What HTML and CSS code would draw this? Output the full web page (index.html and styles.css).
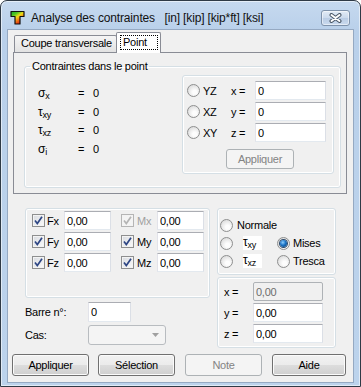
FILE: index.html
```html
<!DOCTYPE html>
<html>
<head>
    <title>Analyse des contraintes</title>
    <link rel="stylesheet" href="styles.css">
</head>
<body>
<div class="window">
    <div class="titlebar">
        <svg class="app-icon" width="15" height="15" viewBox="0 0 15 15">
            <defs>
                <linearGradient id="tgrad" x1="0" y1="0" x2="0.7" y2="1">
                    <stop offset="0" stop-color="#0fae2a"/>
                    <stop offset="0.3" stop-color="#58c824"/>
                    <stop offset="0.5" stop-color="#f2dc18"/>
                    <stop offset="0.75" stop-color="#ee6a14"/>
                    <stop offset="1" stop-color="#d8140f"/>
                </linearGradient>
            </defs>
            <path d="M1 1.5h13v5h-4v7.5h-5v-7.5h-4z" fill="url(#tgrad)" stroke="#111" stroke-width="1.2" stroke-linejoin="round"/>
        </svg>
        <span class="title">Analyse des contraintes&nbsp;&nbsp; [in] [kip] [kip*ft] [ksi]</span>
        <div class="close-btn">
            <svg width="13" height="10" viewBox="0 0 13 10">
                <path d="M2.5 2L10.5 8M10.5 2L2.5 8" stroke="#4a5868" stroke-width="4" stroke-linecap="round"/>
                <path d="M2.5 2L10.5 8M10.5 2L2.5 8" stroke="#ffffff" stroke-width="2" stroke-linecap="round"/>
            </svg>
        </div>
    </div>

    <div class="client">
        <div class="tabs">
            <div class="tab">Coupe transversale</div>
            <div class="tab active"><span class="focus">Point</span></div>
        </div>
        <div class="tabpanel">
            <fieldset class="group">
                <legend>Contraintes dans le point</legend>
                <div class="group-body">
                    <div class="stress">
                        <span class="sym">σ<sub>x</sub></span><span>=</span><span>0</span>
                        <span class="sym">τ<sub>xy</sub></span><span>=</span><span>0</span>
                        <span class="sym">τ<sub>xz</sub></span><span>=</span><span>0</span>
                        <span class="sym">σ<sub>i</sub></span><span>=</span><span>0</span>
                    </div>
                    <div class="box point-box">
                        <div class="point-grid">
                            <span class="rb"></span><span class="lbl">YZ</span><span class="lbl">x =</span><input type="text" value="0">
                            <span class="rb"></span><span class="lbl">XZ</span><span class="lbl">y =</span><input type="text" value="0">
                            <span class="rb"></span><span class="lbl">XY</span><span class="lbl">z =</span><input type="text" value="0">
                        </div>
                        <button class="btn small" disabled>Appliquer</button>
                    </div>
                </div>
            </fieldset>
        </div>

        <div class="lower">
            <div class="left-col">
                <div class="box loads">
                    <span class="cb on"><svg width="11" height="11" viewBox="0 0 11 11"><path d="M2 5.5L4.3 8.5L9 1.8" fill="none" stroke="#2e4684" stroke-width="1.7"/></svg></span>
                    <span class="lbl">Fx</span><input type="text" value="0,00">
                    <span class="cb on off"><svg width="11" height="11" viewBox="0 0 11 11"><path d="M2 5.5L4.3 8.5L9 1.8" fill="none" stroke="#b4b4b4" stroke-width="1.7"/></svg></span>
                    <span class="lbl m off">Mx</span><input type="text" value="0,00">

                    <span class="cb on"><svg width="11" height="11" viewBox="0 0 11 11"><path d="M2 5.5L4.3 8.5L9 1.8" fill="none" stroke="#2e4684" stroke-width="1.7"/></svg></span>
                    <span class="lbl">Fy</span><input type="text" value="0,00">
                    <span class="cb on"><svg width="11" height="11" viewBox="0 0 11 11"><path d="M2 5.5L4.3 8.5L9 1.8" fill="none" stroke="#2e4684" stroke-width="1.7"/></svg></span>
                    <span class="lbl m">My</span><input type="text" value="0,00">

                    <span class="cb on"><svg width="11" height="11" viewBox="0 0 11 11"><path d="M2 5.5L4.3 8.5L9 1.8" fill="none" stroke="#2e4684" stroke-width="1.7"/></svg></span>
                    <span class="lbl">Fz</span><input type="text" value="0,00">
                    <span class="cb on"><svg width="11" height="11" viewBox="0 0 11 11"><path d="M2 5.5L4.3 8.5L9 1.8" fill="none" stroke="#2e4684" stroke-width="1.7"/></svg></span>
                    <span class="lbl m">Mz</span><input type="text" value="0,00">
                </div>
                <div class="field-row barre">
                    <span class="field-label">Barre n°:</span>
                    <input type="text" class="num" value="0">
                </div>
                <div class="field-row cas">
                    <span class="field-label">Cas:</span>
                    <div class="combo">
                        <svg width="7" height="4" viewBox="0 0 7 4"><path d="M0 0h7L3.5 4z" fill="#a0a0a0"/></svg>
                    </div>
                </div>
            </div>

            <div class="right-col">
                <div class="box modes">
                    <span class="rb"></span><span class="lbl wide">Normale</span>
                    <span class="rb"></span><span class="lbl"><span class="tau">τ<sub>xy</sub></span></span>
                    <span class="rb on"></span><span class="lbl">Mises</span>
                    <span class="rb"></span><span class="lbl"><span class="tau">τ<sub>xz</sub></span></span>
                    <span class="rb"></span><span class="lbl">Tresca</span>
                </div>
                <div class="box coords">
                    <span class="lbl">x =</span><input type="text" value="0,00" disabled>
                    <span class="lbl">y =</span><input type="text" value="0,00">
                    <span class="lbl">z =</span><input type="text" value="0,00">
                </div>
            </div>
        </div>

        <div class="buttons">
            <button class="btn">Appliquer</button>
            <button class="btn">Sélection</button>
            <button class="btn" disabled>Note</button>
            <button class="btn aide">Aide</button>
        </div>
    </div>
</div>
</body>
</html>
```

FILE: styles.css
```css
* {
    box-sizing: border-box;
}
body {
    margin: 0;
    font-family: "Liberation Sans", Arial, sans-serif;
    font-size: 11px;
    color: #000;
    background: #ffffff;
}
.window {
    width: 361px;
    height: 387px;
    border: 1px solid #2f3a46;
    border-radius: 7px 7px 0 0;
    background: linear-gradient(#c6d9ef, #b9d0ea 30px, #bcd3ec);
    box-shadow: inset 0 0 0 1px rgba(255, 255, 255, 0.55);
    padding: 0 6px 3px 6px;
    display: flex;
    flex-direction: column;
}
.titlebar {
    height: 28px;
    padding-top: 5px;
    display: flex;
    align-items: center;
}
.app-icon {
    margin-left: 3px;
    flex: none;
}
.title {
    margin-left: 6px;
    font-size: 12px;
    letter-spacing: -0.15px;
    color: #111;
    white-space: nowrap;
}
.close-btn {
    margin-left: auto;
    margin-right: 4px;
    width: 29px;
    height: 16px;
    border: 1px solid #7e92ab;
    border-radius: 3px;
    background: linear-gradient(#e2ebf6, #cbdaec 50%, #b9cce4 50%, #cadaee);
    box-shadow: inset 0 0 0 1px rgba(255, 255, 255, 0.5);
    display: flex;
    align-items: center;
    justify-content: center;
}
.client {
    height: 354px;
    border: 1px solid #95a9c2;
    background: #f0f0f0;
    padding: 2px 6px 0 4px;
    letter-spacing: -0.25px;
}

/* tabs */
.tabs {
    display: flex;
    align-items: flex-start;
    height: 21px;
    margin-left: 1px;
    margin-bottom: -1px;
    position: relative;
    z-index: 1;
}
.tab {
    margin-top: 3px;
    margin-left: 1px;
    width: 103px;
    height: 17px;
    padding: 1px 0 0 6px;
    border: 1px solid #898c95;
    border-bottom: none;
    border-radius: 2px 2px 0 0;
    background: linear-gradient(#f5f5f5, #e2e2e2);
    white-space: nowrap;
}
.tab.active {
    margin-top: 0;
    margin-left: -1px;
    width: 45px;
    height: 21px;
    padding: 2px 0 0 3px;
    background: #ffffff;
}
.focus {
    display: block;
    width: 38px;
    height: 15px;
    border: 1px dotted #000;
    padding-left: 2px;
    line-height: 13px;
}
.tabpanel {
    margin-left: 1px;
    width: 334px;
    height: 142px;
    border: 1px solid #898c95;
    background: #f0f0f0;
}

/* group boxes */
.group {
    margin: 7px 0 0 10px;
    padding: 0;
    width: 317px;
    height: 128px;
    border: 1px solid #d5dfe5;
    border-radius: 3px;
    box-shadow: inset 0 0 0 1px #fff;
    min-inline-size: auto;
}
.group legend {
    margin-left: 5px;
    padding: 0 2px;
    line-height: 13px;
    font-size: 11px;
}
.group-body {
    display: flex;
    align-items: flex-start;
}
.box {
    border: 1px solid #d5dfe5;
    border-radius: 3px;
    box-shadow: inset 0 0 0 1px #fff;
}
.stress {
    margin: 11px 0 0 13px;
    display: grid;
    grid-template-columns: 40px 15px auto;
    grid-auto-rows: 18.5px;
    align-items: center;
}
.sym {
    font-size: 12px;
}
sub {
    font-size: 9px;
    vertical-align: -2px;
    line-height: 0;
}
.point-box {
    margin: 2px 6px 0 auto;
    width: 152px;
    height: 99px;
    padding: 5px 0 0 4px;
}
.point-grid {
    display: grid;
    grid-template-columns: 13px 28px 27px 71px;
    grid-auto-rows: 19px;
    row-gap: 2px;
    align-items: center;
}
.point-grid .lbl {
    padding-left: 3px;
}

/* inputs */
input[type="text"] {
    font: inherit;
    letter-spacing: -0.25px;
    width: 100%;
    height: 19px;
    padding: 0 2px;
    border: 1px solid;
    border-color: #abadb3 #dbdfe6 #e3e9ef #e2e3ea;
    background: #ffffff;
    color: #000;
    outline: none;
}
input[type="text"]:disabled {
    background: #f0f0f0;
    border-color: #aeb2b6;
    border-radius: 2px;
    color: #6d6d6d;
}

/* check boxes and radios */
.cb {
    width: 13px;
    height: 13px;
    border: 1px solid #8e8f8f;
    background: linear-gradient(135deg, #d8dbe0, #fbfbfb);
    box-shadow: inset 0 0 0 1px #f3f3f3;
    display: flex;
}
.cb.off {
    border-color: #b5b5b5;
    background: #f4f4f4;
}
.rb {
    width: 13px;
    height: 13px;
    border: 1px solid #8e8f8f;
    border-radius: 50%;
    background: radial-gradient(circle at 60% 65%, #fdfdfd 20%, #d6d6d6 90%);
    display: flex;
    align-items: center;
    justify-content: center;
}
.rb.on::after {
    content: "";
    width: 7px;
    height: 7px;
    border-radius: 50%;
    background: radial-gradient(circle at 40% 35%, #8fd0ff 0, #1a72c4 45%, #0d3c6e 100%);
    box-shadow: 0 0 0 1px #2c4a6b;
}

/* lower part */
.lower {
    margin: 14px 0 0 13px;
    display: grid;
    grid-template-columns: 185px 119px;
    column-gap: 7px;
}
.loads {
    height: 90px;
    padding: 2px 0 0 6px;
    display: grid;
    grid-template-columns: 13px 19px 57px 13px 23px 47px;
    grid-auto-rows: 19px;
    row-gap: 2px;
    align-items: center;
}
.loads input[type="text"] {
    width: 47px;
}
.loads .lbl {
    padding-left: 2px;
}
.loads .lbl.m {
    padding-left: 3px;
}
.lbl.off {
    color: #a0a0a0;
}
.field-row {
    display: flex;
    align-items: center;
}
.barre {
    margin-top: 4px;
}
.cas {
    margin-top: 3px;
}
.field-label {
    width: 63px;
}
.barre input[type="text"] {
    width: 43px;
    height: 20px;
}
.combo {
    width: 78px;
    height: 20px;
    border: 1px solid #b8bcc0;
    border-radius: 3px;
    background: #f4f4f4;
    display: flex;
    align-items: center;
    justify-content: flex-end;
    padding-right: 6px;
}
.modes {
    height: 67px;
    padding: 7px 0 0 2px;
    display: grid;
    grid-template-columns: 13px 44px 13px auto;
    grid-auto-rows: 18px;
    align-items: center;
}
.modes .lbl {
    padding-left: 3px;
}
.modes .lbl.wide {
    grid-column: 2 / -1;
    padding-left: 4px;
}
.tau {
    display: inline-block;
    margin-left: 7px;
    width: 19px;
    height: 14px;
    line-height: 13px;
    background: #ffffff;
    font-size: 12px;
}
.coords {
    margin-top: 2px;
    height: 71px;
    padding: 4px 0 0 6px;
    display: grid;
    grid-template-columns: 29px 70px;
    grid-auto-rows: 19px;
    row-gap: 2px;
    align-items: center;
}

/* buttons */
.buttons {
    margin-top: 6px;
    display: flex;
}
.btn {
    font: inherit;
    letter-spacing: -0.25px;
    width: 77px;
    height: 22px;
    padding: 0;
    border: 1px solid #707070;
    border-radius: 3px;
    background: linear-gradient(#f2f2f2, #ebebeb 50%, #dddddd 50%, #cfcfcf);
    box-shadow: inset 0 0 0 1px #fbfbfb;
    color: #000;
}
.btn + .btn {
    margin-left: 10px;
}
.btn:nth-child(2) {
    margin-left: 9px;
}
.btn.aide {
    width: 74px;
}
.btn:disabled {
    border-color: #adb2b5;
    background: #f4f4f4;
    box-shadow: none;
    color: #838383;
}
.btn.small {
    margin: 7px 0 0 39px;
    width: 68px;
    height: 20px;
}
```
